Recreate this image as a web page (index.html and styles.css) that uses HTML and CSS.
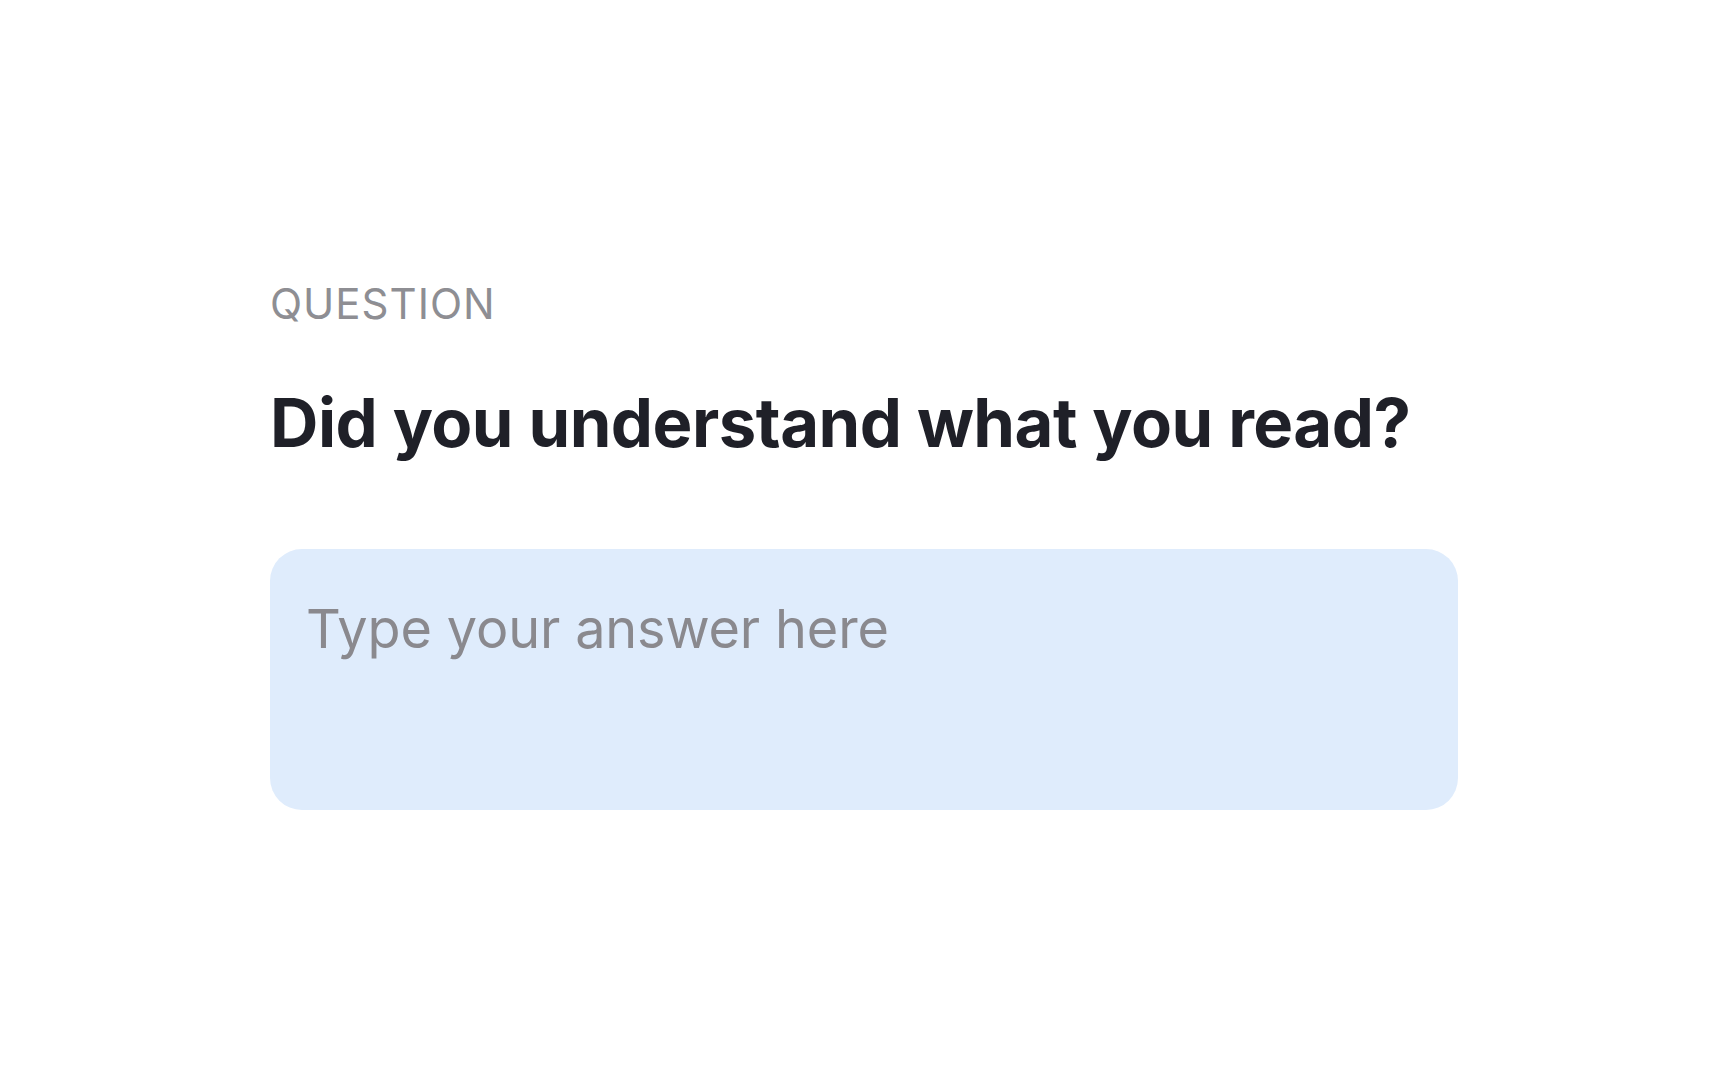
FILE: index.html
```html
<!DOCTYPE html>
<html>
<head>
    <meta name="viewport" content="width=device-width, initial-scale=1.0">
    <link rel="stylesheet" href="styles.css">
</head>
<body>
    <div class="container">
        <p class="label">QUESTION</p>
        <h1 class="question">Did you understand what you read?</h1>
        <textarea class="answer" name="answer" placeholder="Type your answer here"></textarea>
    </div>
</body>
</html>
```

FILE: styles.css
```css
/* Basic page setup */
body {
    font-family: Inter, "Noto Sans", sans-serif;
    background: white;
    margin: 0;
    padding: 278px 0 0;
}

/* Main container */
.container {
    width: 1188px;
    margin: 0 auto;
    display: flex;
    flex-direction: column;
}

/* Small caps label */
.label {
    margin: 0;
    font-size: 42px;
    letter-spacing: 1px;
    color: #8e8e93;
}

/* Question text */
.question {
    margin: 53px 0 86px;
    font-size: 67px;
    font-weight: 700;
    letter-spacing: -0.5px;
    color: #1f2028;
}

/* Answer field */
.answer {
    box-sizing: border-box;
    width: 100%;
    height: 261px;
    padding: 42px 36px 38px;
    border: none;
    border-radius: 32px;
    background: #dfecfc;
    font-family: inherit;
    font-size: 54px;
    line-height: 1.4;
    letter-spacing: -0.15px;
    color: #1f2028;
    resize: none;
    outline: none;
}

.answer::placeholder {
    color: #8a898e;
}
```
